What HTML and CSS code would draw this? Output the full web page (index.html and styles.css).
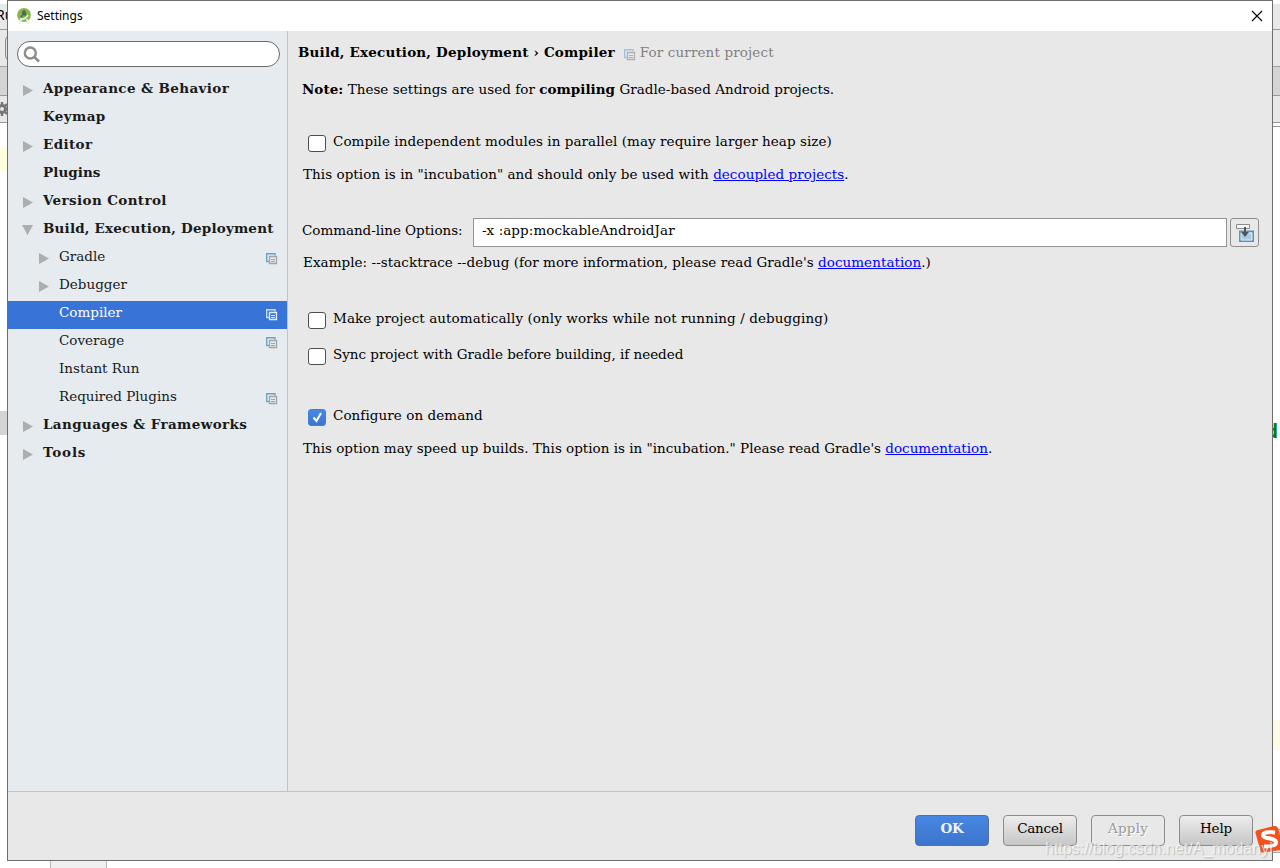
FILE: index.html
```html
<!DOCTYPE html>
<html lang="en">
<head>
    <meta charset="UTF-8">
    <title>Settings</title>
    <link rel="stylesheet" href="styles.css">
</head>
<body>
    <svg class="defs">
        <symbol id="copy" viewBox="0 0 12 12">
            <path class="back" d="M3 8.500H.700v-7.800h8.300V2.500" fill="none" stroke-width="1.400"/>
            <path class="front" d="M3.500 3.500h7v7h-7z" fill="none" stroke-width="1.300"/>
            <path class="front" d="M5 6.500h4M5 8.500h4" fill="none"/>
        </symbol>
    </svg>

    <div class="ide">
        <div class="ide-menu">Ru</div>
        <div class="ide-toolbar"><span class="ide-combo"></span></div>
        <div class="ide-nav"></div>
        <div class="ide-tabs">
            <svg width="14" height="14" viewBox="0 0 14 14"><circle cx="7" cy="7" r="3.500" fill="none" stroke="#757575" stroke-width="3"/><path d="M7 0v3M7 11v3M0 7h3M11 7h3M2 2l2 2M10 10l2 2M12 2l-2 2M4 10l-2 2" stroke="#757575" stroke-width="2.400"/></svg>
        </div>
        <div class="ide-editor">
            <div class="gutter"><i class="caret-row"></i><i class="tab-mark"></i></div>
            <div class="code"><b>d</b><i></i></div>
        </div>
        <div class="taskbar"></div>
    </div>

    <!-- tray tooltip edge behind the input method logo -->
    <div class="tray"></div>

    <div class="dialog">
        <div class="titlebar">
            <svg width="16" height="17" viewBox="0 0 16 17"><circle cx="7" cy="7" r="6.900" fill="#85b74f"/><path d="M4 9.500 7 5l3 4.500M7 2v3" stroke="#5a6a55" stroke-width="1.600" fill="none"/><circle cx="7" cy="5" r="2.200" fill="#56645a"/><path d="M3 10.500q4.500 2 8-3.500M4.500 11.500l-2.500 4M9.500 11l2.500 4.500" stroke="#e9eee6" stroke-width="1.700" fill="none"/></svg>
            <span>Settings</span>
            <svg class="close" width="12" height="12" viewBox="0 0 12 12"><path d="M1 1l10 10M11 1L1 11" stroke="#000" stroke-width="1.100"/></svg>
        </div>
        <div class="main">
            <div class="sidebar">
                <div class="search">
                    <svg width="18" height="18" viewBox="0 0 18 18"><circle cx="7.300" cy="7" r="5.500" fill="none" stroke="#8c8c8c" stroke-width="2.400"/><path d="M11 10.700l5 5" stroke="#8c8c8c" stroke-width="2.600"/></svg>
                </div>
                <ul class="tree">
                    <li class="top"><i class="arrow"></i><span>Appearance &amp; Behavior</span></li>
                    <li class="top"><span>Keymap</span></li>
                    <li class="top"><i class="arrow"></i><span>Editor</span></li>
                    <li class="top plugins"><span>Plugins</span></li>
                    <li class="top"><i class="arrow"></i><span>Version Control</span></li>
                    <li class="top build"><i class="arrow open"></i><span>Build, Execution, Deployment</span></li>
                    <li><i class="arrow"></i><span>Gradle</span><svg class="copy"><use href="#copy"/></svg></li>
                    <li><i class="arrow"></i><span>Debugger</span></li>
                    <li class="selected"><span>Compiler</span><svg class="copy"><use href="#copy"/></svg></li>
                    <li><span>Coverage</span><svg class="copy"><use href="#copy"/></svg></li>
                    <li><span>Instant Run</span></li>
                    <li><span>Required Plugins</span><svg class="copy"><use href="#copy"/></svg></li>
                    <li class="top"><i class="arrow"></i><span>Languages &amp; Frameworks</span></li>
                    <li class="top tools"><i class="arrow"></i><span>Tools</span></li>
                </ul>
            </div>
            <div class="content">
                <div class="breadcrumb"><b>Build, Execution, Deployment › Compiler</b><svg class="copy"><use href="#copy"/></svg><span>For current project</span></div>
                <p class="note"><b>Note:</b> These settings are used for <b>compiling</b> Gradle-based Android projects.</p>
                <label class="check parallel"><i></i><span>Compile independent modules in parallel (may require larger heap size)</span></label>
                <p class="hint">This option is in "incubation" and should only be used with <a>decoupled projects</a>.</p>
                <div class="options">
                    <label>Command-line Options:</label>
                    <div class="field">-x :app:mockableAndroidJar</div>
                    <button class="expand"><svg width="18" height="18" viewBox="0 0 18 18"><path d="M3.800 7.300h13.500v10H3.800z" fill="#a9cbe0" stroke="#4a97c4" stroke-width="1.500"/><path d="M5.200 9h10.600v7H5.200z" fill="none" stroke="#dbe8f0"/><path d="M.5.500h13v4H.5z" fill="#f4f4f4" stroke="#8c8c8c"/><path d="M8 3h2v5h3l-4 5-4-5h3z" fill="#555"/></svg></button>
                </div>
                <p class="hint example">Example: --stacktrace --debug (for more information, please read Gradle's <a>documentation</a>.)</p>
                <label class="check make"><i></i><span>Make project automatically (only works while not running / debugging)</span></label>
                <label class="check sync"><i></i><span>Sync project with Gradle before building, if needed</span></label>
                <label class="check demand"><i class="on"><svg width="18" height="17" viewBox="0 0 18 17"><path d="M5.500 8.500l3 3.500 4.500-8" fill="none" stroke="#fff" stroke-width="2"/></svg></i><span>Configure on demand</span></label>
                <p class="hint speed">This option may speed up builds. This option is in "incubation." Please read Gradle's <a>documentation</a>.</p>
            </div>
        </div>
        <div class="footer">
            <button class="ok">OK</button>
            <button>Cancel</button>
            <button class="disabled">Apply</button>
            <button>Help</button>
        </div>
    </div>

    <div class="ime"><svg width="28" height="28" viewBox="0 0 28 28"><path d="M1.500 8Q1 6 3 5.300L20 1q3-.5 4 2l4 14v8L9 27.500q-2 .5-2.500-1.500z" fill="#f4511e"/><path d="M21 7.500q-12-1.500-12 3c0 4 13 1.500 13 7q0 4-12 4" fill="none" stroke="#fff" stroke-width="4"/></svg></div>
    <div class="watermark">https://blog.csdn.net/A_modanyi</div>
</body>
</html>
```
FILE: styles.css
```css
* {
    box-sizing: border-box;
}
body {
    margin: 0;
    position: relative;
    width: 1280px;
    height: 868px;
    overflow: hidden;
    background: #fff;
    color: #000;
    font: 13.5px/20px "DejaVu Serif", serif;
}
p, ul {
    margin: 0;
    padding: 0;
}
i {
    font-style: normal;
}
.defs {
    display: none;
}

/* IDE window behind the dialog */
.ide {
    display: flex;
    flex-direction: column;
    height: 868px;
    padding-top: 4px;
}
.ide-menu {
    height: 26px;
    background: #e8e8e8;
    border-bottom: 1px solid #999;
    text-indent: -4px;
    font: 14px/21px "Noto Sans", sans-serif;
}
.ide-toolbar {
    height: 37px;
    padding: 6px 0 0 5px;
    background: #e8e8e8;
    border-bottom: 1px solid #a0a0a0;
}
.ide-combo {
    display: block;
    width: 40px;
    height: 24px;
    border: 1px solid #888;
    border-radius: 4px;
}
.ide-nav {
    height: 29px;
    background: #d4d4d4;
    border-bottom: 1px solid #999;
}
.ide-tabs {
    height: 27px;
    padding-top: 6px;
    background: #e8e8e8;
    border-bottom: 1px solid #999;
}
.ide-tabs svg {
    display: block;
    margin-left: -5px;
}
.ide-editor {
    flex: 1;
    display: flex;
    justify-content: space-between;
}
.gutter i {
    display: block;
    width: 20px;
    height: 24px;
}
.gutter .caret-row {
    margin-top: 24px;
    background: #fffce0;
}
.gutter .tab-mark {
    margin-top: 240px;
    background: #d4d4d4;
}
.code {
    width: 20px;
    height: 100px;
    margin-top: 3px;
    border-top: 1px solid #999;
}
.code b {
    display: block;
    margin-top: 292px;
    padding-left: 6px;
    color: #008000;
    font: bold 20px/24px "DejaVu Sans Mono", monospace;
}
.code i {
    display: block;
    height: 30px;
    margin-top: 277px;
    background: #fffae3;
}
.taskbar {
    width: 57px;
    height: 8px;
    margin-left: 50px;
    background: #f0f0f0;
    border: solid #b5b5b5;
    border-width: 0 1px;
}
.tray {
    position: absolute;
    right: 0;
    top: 829px;
    width: 10px;
    height: 24px;
    border: solid #aaa;
    border-width: 1px 0;
}

/* Dialog */
.dialog {
    position: absolute;
    left: 7px;
    top: 0;
    width: 1266px;
    height: 861px;
    display: flex;
    flex-direction: column;
    background: #e8e8e8;
    border: 1px solid #6e6e6e;
}
.titlebar {
    display: flex;
    align-items: center;
    height: 30px;
    padding: 0 9px;
    background: #fff;
    font: 12px/20px "Noto Sans", sans-serif;
}
.titlebar span {
    margin-left: 4px;
}
.close {
    margin-left: auto;
    margin-top: -1px;
}
.main {
    flex: 1;
    display: flex;
}
.sidebar {
    width: 280px;
    padding-top: 10px;
    background: #e5ebef;
    border-right: 1px solid #c3c3c3;
}
.search {
    width: 263px;
    height: 26px;
    margin: 0 0 10px 9px;
    padding: 4px 5px;
    background: #fff;
    border: 1px solid #6a6a6a;
    border-radius: 13px;
}
.search svg {
    display: block;
}
.tree {
    list-style: none;
}
.tree li {
    display: flex;
    height: 28px;
    padding-left: 51px;
    line-height: 22px;
    color: #1a1a1a;
}
.tree .top {
    padding-left: 35px;
    font-weight: bold;
    letter-spacing: 0.37px;
}
.tree .build {
    letter-spacing: 0.18px;
}
.tree .plugins {
    letter-spacing: 0.05px;
}
.tree .tools {
    letter-spacing: 0.8px;
}
.arrow {
    width: 10px;
    height: 11px;
    margin: 8px 10px 0 -20px;
    background: #adadad;
    clip-path: polygon(0 0, 100% 50%, 0 100%);
}
.arrow.open {
    width: 11px;
    height: 10px;
    margin: 8px 10px 0 -21px;
    clip-path: polygon(0 0, 100% 0, 50% 100%);
}
.copy {
    width: 12px;
    height: 12px;
}
.back {
    stroke: var(--back, #6aa3c4);
}
.front {
    stroke: var(--front, #a3a3a3);
}
.tree .copy {
    margin: 8px 9px 0 auto;
}
.tree li.selected {
    --back: #c8d9f6;
    --front: #e6eefb;
    background: #3874d8;
    color: #fff;
}
.content {
    flex: 1;
    padding: 11px 13px 0 15px;
    letter-spacing: 0.05px;
}
.breadcrumb {
    display: flex;
    height: 20px;
    margin-left: -5px;
    letter-spacing: 0.18px;
}
.breadcrumb .copy {
    --back: #9fc3d8;
    --front: #b0b0b0;
    margin: 7px 4px 0 9px;
}
.breadcrumb span {
    color: #808080;
    letter-spacing: 0.13px;
}
.note {
    margin: 17px 0 32px -1px;
    letter-spacing: 0.03px;
}
.check {
    display: flex;
    height: 20px;
    margin-left: 5px;
}
.check i {
    width: 18px;
    height: 17px;
    margin: 4px 7px 0 0;
    background: #fff;
    border: 1px solid #4f4f4f;
    border-radius: 3px;
}
.check .on {
    background: linear-gradient(#4688e4, #3c74cf);
    border-color: #3f80dd;
}
.check .on svg {
    display: block;
    margin: -1px;
}
.hint {
    height: 20px;
    white-space: nowrap;
}
a {
    color: #0000ff;
    text-decoration: underline;
}
.parallel {
    margin-bottom: 13px;
    letter-spacing: 0.06px;
}
.options {
    display: flex;
    height: 29px;
    margin: 34px 0 5px -1px;
}
.options label {
    width: 171px;
    padding-top: 2px;
    letter-spacing: -0.04px;
}
.field {
    flex: 1;
    padding: 1px 8px;
    background: #fff;
    border: 1px solid #949494;
    letter-spacing: 0.06px;
}
.expand {
    width: 29px;
    height: 29px;
    margin-left: 3px;
    padding: 4px 0 4px 5px;
    background: #e8e8e8;
    border: 1px solid #8f8f8f;
    border-radius: 3px;
}
.expand svg {
    display: block;
}
.example {
    margin-bottom: 36px;
}
.make {
    margin-bottom: 16px;
    letter-spacing: 0.09px;
}
.sync {
    margin-bottom: 41px;
    letter-spacing: -0.03px;
}
.demand {
    margin-bottom: 13px;
    letter-spacing: 0.07px;
}
.speed {
    letter-spacing: 0;
}
.footer {
    display: flex;
    justify-content: flex-end;
    gap: 14px;
    height: 69px;
    padding: 23px 19px 0 0;
    border-top: 1px solid #c3c3c3;
}
.footer button {
    width: 74px;
    height: 31px;
    padding: 0 0 5px;
    background: linear-gradient(#ededed, #c6c6c6);
    border: 1px solid #8c8c8c;
    border-radius: 4px;
    color: #000;
    font: inherit;
    letter-spacing: -0.2px;
}
.footer .ok {
    background: linear-gradient(#4687e3, #3d74cc);
    border-color: #5a6f94;
    color: #f2f6fc;
    font-weight: bold;
}
.footer .disabled {
    background: #e8e8e8;
    color: #9a9a9a;
    text-shadow: 1px 1px #fff;
    letter-spacing: 0.2px;
}

.ime {
    position: absolute;
    right: -2px;
    top: 825px;
}
.watermark {
    position: absolute;
    left: 1045px;
    top: 838px;
    color: rgba(255, 255, 255, 0.65);
    font: 16px/22px "Liberation Sans", sans-serif;
    text-shadow: 1px 1px 1px rgba(120, 120, 120, 0.4);
}
```
